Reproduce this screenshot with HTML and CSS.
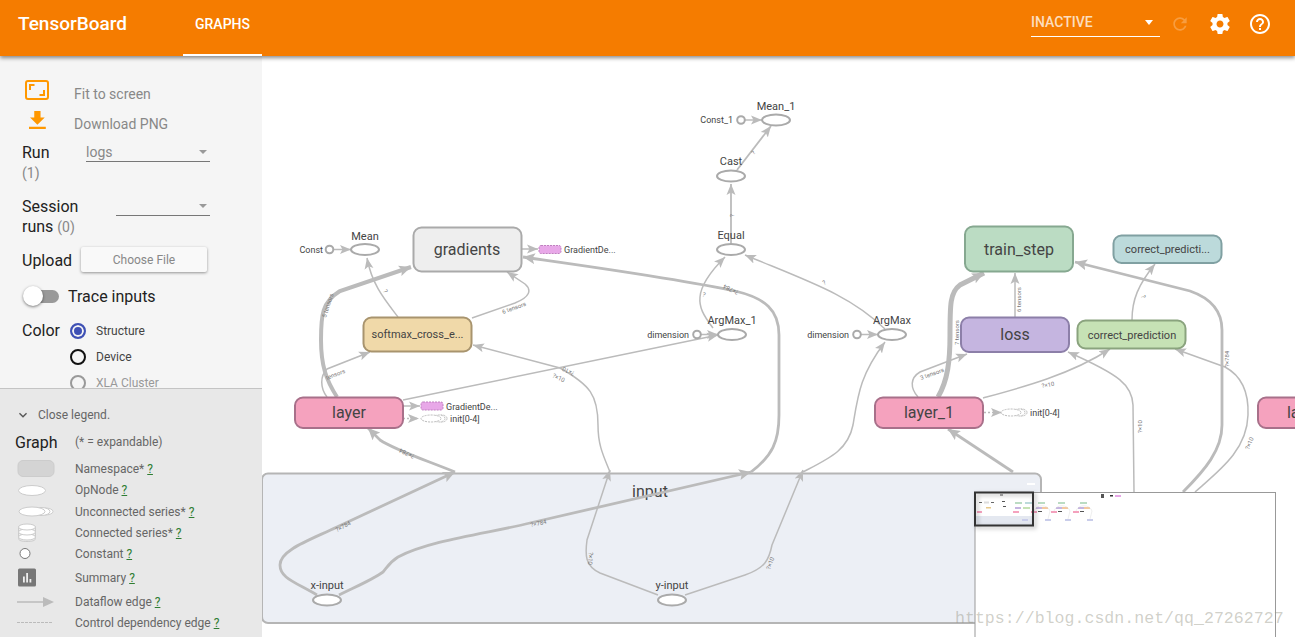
FILE: index.html
```html
<!DOCTYPE html>
<html lang="en">
<head>
    <meta charset="UTF-8">
    <meta name="viewport" content="width=device-width, initial-scale=1.0">
    <title>TensorBoard</title>
    <link rel="stylesheet" href="styles.css">
</head>
<body>
    <header class="topbar">
        <div class="brand">TensorBoard</div>
        <div class="tab">GRAPHS</div>
        <div class="topbar-right">
            <div class="run-status">
                <span>INACTIVE</span>
                <i class="caret caret-white"></i>
            </div>
            <svg class="top-icon refresh" viewBox="0 0 24 24"><path d="M17.65 6.35C16.2 4.9 14.21 4 12 4c-4.42 0-7.99 3.58-7.99 8s3.57 8 7.99 8c3.73 0 6.84-2.55 7.73-6h-2.08c-.82 2.33-3.04 4-5.65 4-3.31 0-6-2.69-6-6s2.69-6 6-6c1.66 0 3.14.69 4.22 1.78L13 11h7V4l-2.35 2.35z"/></svg>
            <svg class="top-icon" viewBox="0 0 24 24"><path d="M19.43 12.98c.04-.32.07-.64.07-.98s-.03-.66-.07-.98l2.11-1.65c.19-.15.24-.42.12-.64l-2-3.46c-.12-.22-.39-.3-.61-.22l-2.49 1c-.52-.4-1.08-.73-1.69-.98l-.38-2.65C14.46 2.18 14.25 2 14 2h-4c-.25 0-.46.18-.49.42l-.38 2.65c-.61.25-1.17.59-1.69.98l-2.49-1c-.23-.09-.49 0-.61.22l-2 3.46c-.13.22-.07.49.12.64l2.11 1.65c-.04.32-.07.65-.07.98s.03.66.07.98l-2.11 1.65c-.19.15-.24.42-.12.64l2 3.46c.12.22.39.3.61.22l2.49-1c.52.4 1.08.73 1.69.98l.38 2.65c.03.24.24.42.49.42h4c.25 0 .46-.18.49-.42l.38-2.65c.61-.25 1.17-.59 1.69-.98l2.49 1c.23.09.49 0 .61-.22l2-3.46c.12-.22.07-.49-.12-.64l-2.11-1.65zM12 15.5c-1.93 0-3.5-1.57-3.5-3.5s1.57-3.5 3.5-3.5 3.5 1.57 3.5 3.5-1.57 3.5-3.5 3.5z"/></svg>
            <svg class="top-icon" viewBox="0 0 24 24"><path d="M11 18h2v-2h-2v2zm1-16C6.48 2 2 6.48 2 12s4.48 10 10 10 10-4.48 10-10S17.52 2 12 2zm0 18c-4.41 0-8-3.59-8-8s3.59-8 8-8 8 3.59 8 8-3.59 8-8 8zm0-14c-2.21 0-4 1.79-4 4h2c0-1.1.9-2 2-2s2 .9 2 2c0 2-3 1.75-3 5h2c0-2.25 3-2.5 3-5 0-2.21-1.79-4-4-4z"/></svg>
        </div>
    </header>

    <div class="page">
        <aside class="sidebar">
            <section class="controls">
                <div class="tool-row">
                    <div class="tool-icon">
                        <svg width="24" height="20" viewBox="0 0 24 20"><rect x="1" y="1" width="22" height="18" rx="2" fill="none" stroke="#ff9800" stroke-width="2"/><path d="M5 10V5h4.500M19 10v5h-4.500" fill="none" stroke="#ff9800" stroke-width="2"/></svg>
                    </div>
                    <span>Fit to screen</span>
                </div>
                <div class="tool-row">
                    <div class="tool-icon">
                        <svg class="download" width="16.800" height="20" viewBox="4 2 16 19"><path fill="#ff9800" d="M19 9h-4V3H9v6H5l7 7 7-7zM4 18v2h16v-2H4z"/></svg>
                    </div>
                    <span>Download PNG</span>
                </div>

                <div class="select-row run-row">
                    <div class="field-label label-run">Run<br><small>(1)</small></div>
                    <div class="select select-run"><span>logs</span><i class="caret"></i></div>
                </div>
                <div class="select-row session-row">
                    <div class="field-label label-session">Session<br>runs <small>(0)</small></div>
                    <div class="select select-session"><span></span><i class="caret"></i></div>
                </div>

                <div class="upload-row">
                    <div class="field-label">Upload</div>
                    <div class="file-button">Choose File</div>
                </div>

                <div class="trace-row">
                    <div class="toggle"><i class="knob"></i></div>
                    <span>Trace inputs</span>
                </div>

                <div class="color-row">
                    <div class="field-label label-color">Color</div>
                    <div class="radio-group">
                        <div class="radio-item"><i class="radio radio-on"></i>Structure</div>
                        <div class="radio-item"><i class="radio radio-dark"></i>Device</div>
                        <div class="radio-item radio-off"><i class="radio"></i>XLA Cluster</div>
                    </div>
                </div>
            </section>

            <section class="legend">
                <div class="legend-toggle">
                    <svg width="16" height="16" viewBox="0 0 24 24"><path fill="#555" d="M16.59 8.59L12 13.17 7.41 8.59 6 10l6 6 6-6z"/></svg>
                    <span>Close legend.</span>
                </div>
                <div class="legend-title"><h3>Graph</h3><span>(* = expandable)</span></div>

                <div class="legend-row">
                    <svg width="60" height="21"><rect x="3" y="2.500" width="36" height="16" rx="5" fill="#d4d4d4" stroke="#ccc"/></svg>
                    <span>Namespace* <u>?</u></span>
                </div>
                <div class="legend-row legend-row-op">
                    <svg width="60" height="21"><ellipse cx="17" cy="10.500" rx="13.500" ry="5" fill="#fff" stroke="#ccc"/></svg>
                    <span>OpNode <u>?</u></span>
                </div>
                <div class="legend-row">
                    <svg width="60" height="21"><ellipse cx="30" cy="10.500" rx="8" ry="3.500" fill="#fff" stroke="#ccc"/><ellipse cx="26" cy="10.500" rx="9" ry="4" fill="#fff" stroke="#ccc"/><ellipse cx="17" cy="10.500" rx="13" ry="4.500" fill="#fff" stroke="#ccc"/></svg>
                    <span>Unconnected series* <u>?</u></span>
                </div>
                <div class="legend-row">
                    <svg width="60" height="21"><path d="M3.500 4.500v12c0 2 3.500 3 8.500 3s8.500-1 8.500-3v-12" fill="#eee" stroke="#ccc"/><ellipse cx="12" cy="15" rx="8.500" ry="3" fill="#fff" stroke="#ccc"/><ellipse cx="12" cy="10" rx="8.500" ry="3" fill="#fff" stroke="#ccc"/><ellipse cx="12" cy="5" rx="8.500" ry="3" fill="#fff" stroke="#ccc"/></svg>
                    <span>Connected series* <u>?</u></span>
                </div>
                <div class="legend-row">
                    <svg width="60" height="21"><circle cx="10" cy="10.500" r="5" fill="#fff" stroke="#777"/></svg>
                    <span>Constant <u>?</u></span>
                </div>
                <div class="legend-row legend-row-tall">
                    <svg width="60" height="21"><rect x="3" y="1.500" width="18" height="18" rx="1.500" fill="#777"/><path d="M8 9.500v6h1.800v-6zM11.200 6v9.500h1.800V6zM14.500 12v3.500h1.800V12z" fill="#eee"/></svg>
                    <span>Summary <u>?</u></span>
                </div>
                <div class="legend-row">
                    <svg width="60" height="21"><path d="M2 11h28" stroke="#bbb" stroke-width="1.500"/><path d="M28 6l11 5-11 5z" fill="#bbb"/></svg>
                    <span>Dataflow edge <u>?</u></span>
                </div>
                <div class="legend-row">
                    <svg width="60" height="21"><path d="M2 10.500h36" stroke="#bbb" stroke-dasharray="3 1"/></svg>
                    <span>Control dependency edge <u>?</u></span>
                </div>
            </section>
        </aside>

        <main class="canvas">
            <!-- viewBox keeps page coordinates so nodes read as they sit in the screenshot -->
            <svg class="graph" viewBox="262 56 1033 581" width="1033" height="581">
                <defs>
                    <marker id="arrow" markerUnits="userSpaceOnUse" markerWidth="12" markerHeight="10" refX="11" refY="5" orient="auto"><path d="M0 0.500L11 5L0 9.500L2.500 5z" fill="#bbb"/></marker>
                    <marker id="arrow-big" markerUnits="userSpaceOnUse" markerWidth="13" markerHeight="11" refX="12" refY="5.500" orient="auto"><path d="M0 0L12 5.500L0 11L2.500 5.500z" fill="#bbb"/></marker>
                    <g id="mini-cluster">
                        <rect x="0" y="0" width="7" height="2" fill="#bbdcc3"/>
                        <rect x="-2" y="5" width="6" height="2" fill="#c5b5e0"/>
                        <rect x="4" y="5" width="6" height="2" fill="#f3c9a0"/>
                        <rect x="-7" y="9" width="6" height="2" fill="#f4a1bd"/>
                        <rect x="0" y="9" width="4" height="1" fill="#555"/>
                        <rect x="7" y="17" width="6" height="2" fill="#c9cdea"/>
                        <path d="M-4 9C-2 2 10 2 12 9L10 17" fill="none" stroke="#ddd" stroke-width=".5"/>
                    </g>
                </defs>

                <!-- input namespace -->
                <rect class="node ns-input" x="262" y="473.500" width="779" height="149.500" rx="6"/>
                <rect x="1027" y="483" width="8" height="2" fill="#fff"/>
                <text class="label label-big" x="650" y="497" text-anchor="middle">input</text>

                <!-- edges -->
                <g class="edges">
                    <path class="w4" marker-end="url(#arrow-big)" d="M337 397C326 380 321 365 321 340C321 315 322 302 340 291L411 267"/>
                    <path class="w3" marker-end="url(#arrow-big)" d="M751 472C772 456 779 442 779 415L779 335C779 310 765 298 735 291C680 279 600 268 523 257"/>
                    <path class="w3" marker-end="url(#arrow-big)" d="M317 595C295 582 280 578 280 565C280 550 310 540 337 527L455 472"/>
                    <path class="w3" marker-end="url(#arrow-big)" d="M455 472C420 458 395 450 380 440L368 428"/>
                    <path class="w3" marker-end="url(#arrow-big)" d="M339 595C355 587 372 580 383 572C388 566 390 562 398 557C430 540 490 533 530 523L751 472"/>
                    <path class="w1" marker-end="url(#arrow)" d="M658 595L600 573C585 566 585 555 587 540L610 470"/>
                    <path class="w1" marker-end="url(#arrow)" d="M610 472C603 455 598 445 598 425C598 395 590 385 560 368L473 345"/>
                    <path class="w1" marker-end="url(#arrow)" d="M685 595L745 575C765 568 769 560 772 545L803 470"/>
                    <path class="w1" marker-end="url(#arrow)" d="M803 472C830 458 848 450 853 425C858 395 860 375 885 342"/>
                    <path class="w1" marker-end="url(#arrow)" d="M398 317C385 300 372 285 367 258"/>
                    <path class="w1" marker-end="url(#arrow)" d="M472 318L515 303C530 297 532 290 525 284L507 272"/>
                    <path class="w1" marker-end="url(#arrow)" d="M327 397C320 388 320 376 327 369L370 352"/>
                    <path class="w1" marker-end="url(#arrow)" d="M403 400L718 335"/>
                    <path class="w1" marker-end="url(#arrow)" d="M330 249.500H351"/>
                    <path class="w1" marker-end="url(#arrow)" d="M741 120H762"/>
                    <path class="w2" marker-end="url(#arrow)" d="M737 170L771 126"/>
                    <path class="w2" marker-end="url(#arrow)" d="M731 244V184"/>
                    <path class="w1" marker-end="url(#arrow)" d="M713 328C703 315 699 307 700 297C701 285 712 270 725 257"/>
                    <path class="w1" marker-end="url(#arrow)" d="M885 329C850 295 810 282 745 255"/>
                    <path class="w1" marker-end="url(#arrow)" d="M697 334.500H718"/>
                    <path class="w1" marker-end="url(#arrow)" d="M857 334.500H878"/>
                    <path class="w1" marker-end="url(#arrow)" d="M521 249H538"/>
                    <path class="w1" marker-end="url(#arrow)" d="M403 406H420"/>
                    <path class="dotted" marker-end="url(#arrow)" d="M403 418.500H419"/>
                    <path class="dotted" marker-end="url(#arrow)" d="M984 412.500H1002"/>

                    <path class="w5" marker-end="url(#arrow-big)" d="M938 397C948 380 950 360 950 335C950 305 950 292 960 285L984 273"/>
                    <path class="w1" marker-end="url(#arrow)" d="M1015 317V273"/>
                    <path class="w1" marker-end="url(#arrow)" d="M918 397C910 388 910 378 920 372L967 354"/>
                    <path class="w1" marker-end="url(#arrow)" d="M983 398C1020 388 1070 375 1110 349"/>
                    <path class="w1" marker-end="url(#arrow)" d="M1132 320C1132 300 1138 285 1155 264"/>
                    <path class="w3" marker-end="url(#arrow-big)" d="M1013 472L948 429"/>
                    <path class="w1" marker-end="url(#arrow)" d="M1134 492L1133 405C1132 385 1120 375 1068 352"/>
                    <path class="w1" marker-end="url(#arrow)" d="M1195 492C1220 470 1247 450 1248 415C1249 390 1240 375 1225 367L1175 349"/>
                    <path class="w3" marker-end="url(#arrow-big)" d="M1183 492C1205 470 1222 450 1222 425V330C1222 310 1210 298 1190 291L1075 262"/>
                </g>

                <!-- edge labels -->
                <g class="edge-labels">
                    <text transform="translate(326 318) rotate(-72)">5 tensors</text>
                    <text transform="translate(327 380) rotate(-22)">tensors</text>
                    <text transform="translate(503 314) rotate(-20)">6 tensors</text>
                    <text transform="translate(383 291) rotate(60)">?</text>
                    <text transform="translate(552 377) rotate(25)">?×10</text>
                    <text transform="translate(575 372) rotate(205)">?×10</text>
                    <text transform="translate(415 455) rotate(205)">?×784</text>
                    <text transform="translate(337 532) rotate(-28)">?×784</text>
                    <text transform="translate(531 527) rotate(-12)">?×784</text>
                    <text transform="translate(589 552) rotate(95)">?×10</text>
                    <text transform="translate(770 570) rotate(-70)">?×10</text>
                    <text transform="translate(739 291) rotate(205)">?×784</text>
                    <text transform="translate(734 217) rotate(-90)">?</text>
                    <text transform="translate(754 155) rotate(-50)">?</text>
                    <text transform="translate(702 296) rotate(20)">?</text>
                    <text transform="translate(824 285) rotate(-30)">?</text>
                    <text transform="translate(959 345) rotate(-90)">7 tensors</text>
                    <text transform="translate(1021 312) rotate(-90)">6 tensors</text>
                    <text transform="translate(921 380) rotate(-20)">3 tensors</text>
                    <text transform="translate(1042 388) rotate(-10)">?×10</text>
                    <text transform="translate(1142 433) rotate(-90)">?×10</text>
                    <text transform="translate(1141 296) rotate(70)">?</text>
                    <text transform="translate(1229 367) rotate(-90)">?×784</text>
                    <text transform="translate(1249 450) rotate(-68)">?×10</text>
                </g>

                <!-- group nodes -->
                <rect class="node" x="413.500" y="227.500" width="108" height="44" rx="8" fill="#eee" stroke="#aaa"/>
                <text class="label label-big" x="467" y="255" text-anchor="middle">gradients</text>
                <rect class="node" x="363.500" y="317.500" width="108" height="34" rx="8" fill="#f0d9a9" stroke="#a8946e"/>
                <text class="label label-mid" x="417.500" y="338" text-anchor="middle">softmax_cross_e...</text>
                <rect class="node" x="295" y="397.500" width="108" height="30.500" rx="8" fill="#f5a2be" stroke="#a8708a"/>
                <text class="label label-big" x="349" y="418" text-anchor="middle">layer</text>
                <rect class="node" x="965" y="226.500" width="108" height="45" rx="8" fill="#bbdcc3" stroke="#86a890"/>
                <text class="label label-big" x="1019" y="255" text-anchor="middle">train_step</text>
                <rect class="node" x="1113.500" y="235.500" width="108" height="27.500" rx="8" fill="#bcdadb" stroke="#80a0a2"/>
                <text class="label label-mid" x="1167.500" y="253" text-anchor="middle">correct_predicti...</text>
                <rect class="node" x="961" y="317.500" width="108" height="34.500" rx="8" fill="#c5b5e0" stroke="#8c7fa8"/>
                <text class="label label-big" x="1015" y="340" text-anchor="middle">loss</text>
                <rect class="node" x="1077.500" y="320.500" width="108" height="28" rx="8" fill="#c6e2b5" stroke="#8aa37e"/>
                <text class="label label-mid" x="1132" y="338.500" text-anchor="middle">correct_prediction</text>
                <rect class="node" x="875" y="397.500" width="108" height="30.500" rx="8" fill="#f5a2be" stroke="#a8708a"/>
                <text class="label label-big" x="929" y="418" text-anchor="middle">layer_1</text>
                <rect class="node" x="1258" y="397.500" width="108" height="30.500" rx="8" fill="#f5a2be" stroke="#a8708a"/>
                <text class="label label-big" x="1312" y="418" text-anchor="middle">layer_2</text>

                <!-- op nodes -->
                <g class="ops">
                    <ellipse cx="365" cy="249.500" rx="14" ry="5.500"/>
                    <ellipse cx="776" cy="120" rx="14" ry="5.500"/>
                    <ellipse cx="731" cy="176" rx="14" ry="5.500"/>
                    <ellipse cx="731" cy="249.500" rx="14" ry="5.500"/>
                    <ellipse cx="732" cy="334.500" rx="14" ry="5.500"/>
                    <ellipse cx="892" cy="334.500" rx="14" ry="5.500"/>
                    <ellipse cx="327" cy="600" rx="14" ry="5.500"/>
                    <ellipse cx="672" cy="600" rx="14" ry="5.500"/>
                    <circle cx="329.500" cy="249.500" r="3.800"/>
                    <circle cx="741" cy="120" r="3.800"/>
                    <circle cx="697" cy="334.500" r="3.800"/>
                    <circle cx="857" cy="334.500" r="3.800"/>
                </g>
                <g class="label label-op" text-anchor="middle">
                    <text x="365" y="240">Mean</text>
                    <text x="776" y="110">Mean_1</text>
                    <text x="731" y="165">Cast</text>
                    <text x="731" y="239">Equal</text>
                    <text x="732" y="324">ArgMax_1</text>
                    <text x="892" y="324">ArgMax</text>
                    <text x="327" y="589">x-input</text>
                    <text x="672" y="589">y-input</text>
                </g>
                <g class="label label-small" text-anchor="end">
                    <text x="323" y="253">Const</text>
                    <text x="733" y="123">Const_1</text>
                    <text x="689" y="338">dimension</text>
                    <text x="849" y="338">dimension</text>
                </g>

                <!-- extracted aux nodes -->
                <rect class="aux" x="539" y="245.500" width="22" height="8" rx="2"/>
                <text class="label label-small" x="564" y="253">GradientDe...</text>
                <rect class="aux" x="421" y="402" width="22" height="8" rx="2"/>
                <text class="label label-small" x="446" y="409.500">GradientDe...</text>
                <g class="series">
                    <ellipse cx="442" cy="418.500" rx="5" ry="3.500"/>
                    <ellipse cx="439" cy="418.500" rx="6" ry="3.500"/>
                    <ellipse cx="431" cy="418.500" rx="10" ry="3.500"/>
                    <ellipse cx="1022" cy="412.500" rx="5" ry="3.500"/>
                    <ellipse cx="1019" cy="412.500" rx="6" ry="3.500"/>
                    <ellipse cx="1011" cy="412.500" rx="10" ry="3.500"/>
                </g>
                <text class="label label-small" x="450" y="422">init[0-4]</text>
                <text class="label label-small" x="1030" y="416">init[0-4]</text>

                <!-- minimap -->
                <rect class="minimap" x="975" y="492.500" width="300.500" height="150"/>
                <g class="minimap-content">
                    <rect x="976" y="516" width="57" height="9" fill="#e4e8f0"/>
                    <rect x="977" y="511" width="5" height="2" fill="#f5a2be"/>
                    <rect x="984" y="501.500" width="5" height="2" fill="#ddd"/>
                    <rect x="986" y="507" width="5" height="1.500" fill="#e8c98a"/>
                    <rect x="979" y="502" width="3" height="1" fill="#666"/>
                    <rect x="991" y="502" width="3" height="1" fill="#666"/>
                    <rect x="1000" y="494.500" width="3" height="1" fill="#555"/>
                    <rect x="1002" y="501" width="3" height="1" fill="#555"/>
                    <rect x="1003" y="506" width="3" height="1" fill="#555"/>
                    <rect x="1015" y="502" width="7" height="2" fill="#bbdcc3"/>
                    <rect x="1025" y="502" width="7" height="2" fill="#bcdadb"/>
                    <rect x="1015" y="507" width="6" height="2" fill="#c5b5e0"/>
                    <rect x="1023" y="507" width="7" height="2" fill="#c6e2b5"/>
                    <rect x="1013" y="511" width="6" height="2" fill="#f5a2be"/>
                    <rect x="1022" y="519" width="6" height="2" fill="#c9cdea"/>
                    <use href="#mini-cluster" x="1038" y="502"/>
                    <use href="#mini-cluster" x="1058" y="502"/>
                    <use href="#mini-cluster" x="1080" y="502"/>
                    <rect x="1101" y="494" width="3" height="4" fill="#555"/>
                    <rect x="1110" y="495" width="3" height="1.500" fill="#333"/>
                    <rect x="1115" y="495" width="6" height="2" fill="#e6a6e6"/>
                </g>
                <rect class="minimap-view" x="975" y="492.500" width="58" height="33"/>

                <text class="watermark" x="955" y="623">https://blog.csdn.net/qq_27262727</text>
            </svg>
        </main>
    </div>
</body>
</html>
```

FILE: styles.css
```css
* {
    box-sizing: border-box;
}

html, body {
    height: 100%;
}

body {
    margin: 0;
    overflow: hidden;
    font-family: Roboto, "Liberation Sans", sans-serif;
    background-color: #fff;
}

/* top bar */
.topbar {
    position: relative;
    z-index: 2;
    display: flex;
    height: 56px;
    background-color: #f57c00;
    color: #fff;
    box-shadow: 0 2px 4px rgba(0, 0, 0, 0.45);
}

.brand {
    width: 183px;
    padding-left: 18px;
    font-size: 19px;
    font-weight: 500;
    line-height: 48px;
}

.tab {
    width: 79px;
    height: 56px;
    padding-left: 12px;
    font-size: 14px;
    font-weight: 500;
    line-height: 48px;
    border-bottom: 2px solid #fff;
}

.topbar-right {
    display: flex;
    align-items: flex-start;
    margin-left: auto;
    padding-right: 23px;
}

.run-status {
    display: flex;
    justify-content: space-between;
    align-items: center;
    width: 129px;
    height: 25px;
    margin-top: 12px;
    padding: 0 7px 5px 0;
    font-size: 14px;
    font-weight: 500;
    color: rgba(255, 255, 255, 0.75);
    border-bottom: 1px solid #fff;
}

.top-icon {
    width: 24px;
    height: 24px;
    margin-top: 12px;
    margin-left: 16px;
    fill: #fff;
}

.refresh {
    width: 20px;
    height: 20px;
    margin: 14px 2px 0 10px;
    opacity: 0.25;
}

.caret {
    width: 0;
    height: 0;
    border-left: 4px solid transparent;
    border-right: 4px solid transparent;
    border-top: 4px solid #999;
}

.caret-white {
    border-left-width: 4.5px;
    border-right-width: 4.5px;
    border-top: 5px solid #fff;
    margin-top: 2px;
}

/* layout */
.page {
    display: flex;
    height: 581px;
}

.sidebar {
    display: flex;
    flex-direction: column;
    flex: none;
    width: 262px;
    background-color: #f5f5f5;
}

.canvas {
    flex: 1;
    overflow: hidden;
}

/* controls */
.controls {
    flex: none;
    height: 332px;
    padding: 24px 0 0 22px;
    overflow: hidden;
    color: #222;
    font-size: 16px;
}

.tool-row {
    display: flex;
    height: 30px;
    font-size: 14px;
    color: #888;
}

.tool-row span {
    padding-top: 4px;
    line-height: 20px;
}

.tool-icon {
    width: 52px;
    padding-left: 3px;
}

.download {
    margin-left: 4px;
}

.field-label {
    line-height: 20px;
}

.field-label small {
    font-size: 14px;
    color: #888;
}

.select-row {
    display: flex;
    align-items: flex-start;
}

.run-row {
    margin-top: 3px;
}

.session-row {
    margin-top: 14px;
}

.label-run {
    width: 64px;
}

.label-session {
    width: 94px;
}

.select {
    display: flex;
    justify-content: space-between;
    align-items: center;
    padding-right: 3px;
    font-size: 14px;
    color: #888;
    border-bottom: 1px solid #777;
}

.select-run {
    width: 124px;
    height: 19px;
}

.select-session {
    width: 94px;
    height: 19px;
}

.upload-row {
    display: flex;
    align-items: center;
    margin-top: 10px;
}

.upload-row .field-label {
    width: 59px;
    padding-top: 2px;
}

.file-button {
    width: 126px;
    height: 25px;
    font-size: 12px;
    line-height: 27px;
    text-align: center;
    color: #888;
    background-color: #f9f9f9;
    border-radius: 2px;
    box-shadow: 0 1px 3px rgba(0, 0, 0, 0.4);
}

.trace-row {
    display: flex;
    align-items: center;
    height: 20px;
    margin-top: 14px;
}

.toggle {
    position: relative;
    flex: none;
    width: 32px;
    height: 13px;
    margin: 0 9px 0 5px;
    background-color: #999;
    border-radius: 7px;
}

.knob {
    position: absolute;
    left: -4px;
    top: -3.5px;
    width: 20px;
    height: 20px;
    background-color: #fff;
    border-radius: 50%;
    box-shadow: 0 1px 3px rgba(0, 0, 0, 0.5);
}

.color-row {
    display: flex;
    margin-top: 12px;
}

.label-color {
    width: 48px;
    line-height: 26px;
}

.radio-item {
    display: flex;
    align-items: center;
    height: 26px;
    font-size: 12px;
    color: #444;
}

.radio-off {
    color: #999;
}

.radio {
    flex: none;
    width: 16px;
    height: 16px;
    margin-right: 10px;
    border: 2px solid #999;
    border-radius: 50%;
}

.radio-dark {
    border-color: #111;
}

.radio-on {
    border-color: #3f51b5;
    background-color: #3f51b5;
    box-shadow: inset 0 0 0 2px #f5f5f5;
}

/* legend */
.legend {
    flex: 1;
    padding: 16px 0 0 15px;
    background-color: #e8e8e8;
    border-top: 1px solid #c4c4c4;
    font-size: 12px;
    color: #666;
}

.legend-toggle {
    display: flex;
    align-items: center;
    height: 20px;
    line-height: 20px;
}

.legend-toggle svg {
    margin-right: 7px;
}

.legend-title {
    display: flex;
    align-items: center;
    height: 20px;
    margin: 7px 0 6px;
}

.legend-title h3 {
    width: 60px;
    margin: 0;
    font-size: 16px;
    font-weight: 400;
    color: #222;
}

.legend-row {
    display: flex;
    align-items: center;
    height: 21px;
}

.legend-row-op {
    height: 22px;
}

.legend-row-tall {
    height: 27px;
}

.legend-row u {
    color: #2e7d32;
}

/* graph */
.graph {
    display: block;
}

.node {
    stroke-width: 2;
}

.ns-input {
    fill: #eceff5;
    stroke: #b5b5b5;
}

.edges path {
    fill: none;
    stroke: #bbb;
}

.w1 {
    stroke-width: 1.5;
}

.w2 {
    stroke-width: 1.8;
}

.w3 {
    stroke-width: 2.8;
}

.w4 {
    stroke-width: 4;
}

.w5 {
    stroke-width: 5;
}

.edges .dotted {
    stroke-width: 1.5;
    stroke-dasharray: 2 2;
}

.edge-labels text {
    font-size: 6px;
    fill: #777;
}

.label {
    fill: #444;
}

.label-big {
    font-size: 16px;
}

.label-mid {
    font-size: 11px;
}

.label-op {
    font-size: 11px;
}

.label-small {
    font-size: 9px;
}

.ops ellipse,
.ops circle {
    fill: #fff;
    stroke: #aaa;
    stroke-width: 2;
}

.aux {
    fill: #e8a8e8;
    stroke: #c080c0;
    stroke-dasharray: 2 1;
}

.series ellipse {
    fill: #fff;
    stroke: #bbb;
    stroke-dasharray: 2 1;
}

.minimap {
    fill: #fff;
    stroke: #999;
}

.minimap-content {
    filter: blur(0.4px);
}

.minimap-view {
    fill: none;
    stroke: #333;
    stroke-width: 2;
    filter: drop-shadow(2px 2px 2px rgba(0, 0, 0, 0.3));
}

.watermark {
    font-family: "Liberation Mono", monospace;
    font-size: 16.6px;
    fill: rgba(150, 150, 135, 0.45);
}
```
